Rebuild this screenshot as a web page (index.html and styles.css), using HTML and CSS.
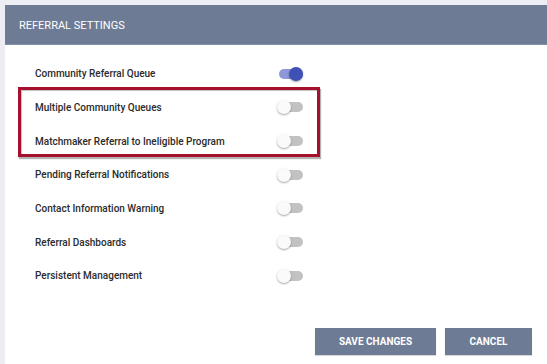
FILE: index.html
```html
<!DOCTYPE html>
<html>
<head>
<meta charset="utf-8">
<link rel="stylesheet" href="styles.css">
</head>
<body>
<div class="card">
  <div class="card-header">REFERRAL SETTINGS</div>
  <div class="card-body">
    <div class="settings">
      <div class="row"><span class="label">Community Referral Queue</span><span class="switch on"><span class="track"></span><span class="thumb"></span></span></div>
      <div class="row"><span class="label">Multiple Community Queues</span><span class="switch"><span class="track"></span><span class="thumb"></span></span></div>
      <div class="row"><span class="label">Matchmaker Referral to Ineligible Program</span><span class="switch"><span class="track"></span><span class="thumb"></span></span></div>
      <div class="row"><span class="label">Pending Referral Notifications</span><span class="switch"><span class="track"></span><span class="thumb"></span></span></div>
      <div class="row"><span class="label">Contact Information Warning</span><span class="switch"><span class="track"></span><span class="thumb"></span></span></div>
      <div class="row"><span class="label">Referral Dashboards</span><span class="switch"><span class="track"></span><span class="thumb"></span></span></div>
      <div class="row"><span class="label">Persistent Management</span><span class="switch"><span class="track"></span><span class="thumb"></span></span></div>
      <div class="highlight"></div>
    </div>
    <div class="actions">
      <button class="btn save">SAVE CHANGES</button>
      <button class="btn cancel">CANCEL</button>
    </div>
  </div>
</div>
</body>
</html>
```
FILE: styles.css
```css
html, body {
  margin: 0;
  padding: 0;
  background: #eceef3;
  height: 100%;
  overflow: hidden;
}
body {
  padding: 5px 0 0 5px;
  box-sizing: border-box;
  font-family: Roboto, "Liberation Sans", sans-serif;
}
.card {
  background: #ffffff;
  height: 100%;
}
.card-header {
  background: #6e7b94;
  color: #ffffff;
  font-size: 11px;
  line-height: 39px;
  padding-left: 14px;
  padding-top: 1px;
  border-bottom: 1px solid #8390a8;
  box-sizing: border-box;
  height: 40px;
}
.card-body {
  padding: 12px 15px 0 30px;
}
.settings {
  position: relative;
  width: 268px;
}
.row {
  height: 33.67px;
  display: flex;
  align-items: center;
  justify-content: space-between;
}
.label {
  font-size: 10px;
  font-weight: 500;
  color: #2b2b2b;
}
.switch {
  position: relative;
  width: 26px;
  height: 14px;
  flex: none;
}
.track {
  position: absolute;
  left: 2px;
  right: 0;
  top: 2px;
  height: 10px;
  border-radius: 5px;
  background: #c2c2c2;
}
.thumb {
  position: absolute;
  left: 0;
  top: 0;
  width: 14px;
  height: 14px;
  border-radius: 50%;
  background: #fafafa;
  box-shadow: 0 1px 2px rgba(0,0,0,0.35);
}
.switch.on .track {
  background: #8e98d8;
}
.switch.on .thumb {
  left: 12px;
  background: #3f51b5;
}
.highlight {
  position: absolute;
  left: -17px;
  top: 30px;
  width: 296px;
  height: 64px;
  border: 3px solid #a5112c;
  box-shadow: 1px 2px 1px rgba(0,0,0,0.3), inset 1px 1px 1px rgba(0,0,0,0.25);
  pointer-events: none;
}
.actions {
  display: flex;
  justify-content: flex-end;
  gap: 9px;
  margin-top: 35px;
}
.btn {
  height: 27px;
  border: none;
  background: #6e7b94;
  color: #ffffff;
  font-family: Roboto, "Liberation Sans", sans-serif;
  font-size: 10px;
  font-weight: 700;
  padding: 0;
  box-shadow: 0 1px 1px rgba(0,0,0,0.15);
}
.btn.save { width: 121px; }
.btn.cancel { width: 87px; }
```
